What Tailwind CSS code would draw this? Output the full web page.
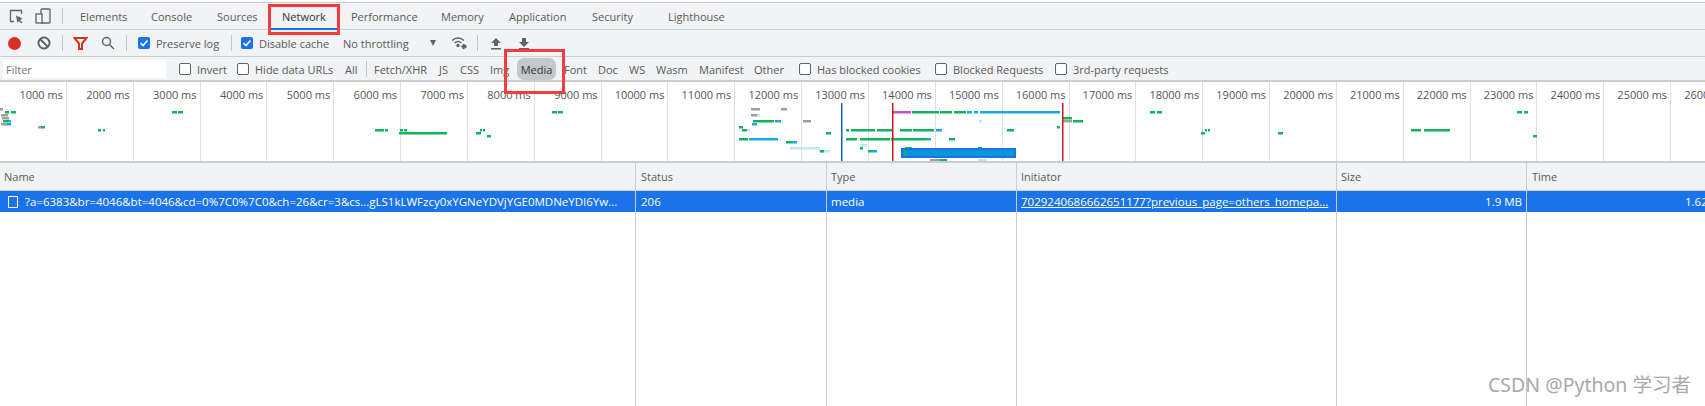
<!DOCTYPE html>
<html lang="en">
<head>
<meta charset="UTF-8" />
<title>DevTools Network</title>
<script src="https://cdn.jsdelivr.net/npm/@tailwindcss/browser@4"></script>
</head>
<body class="relative h-[406px] w-[1705px] overflow-hidden bg-white text-[11px] leading-none text-[#5a5a5a] font-['Open_Sans','Noto_Sans',sans-serif]">

  <!-- Tabs -->
  <div class="mt-[2px] flex h-[28px] items-center border-y border-[#cbcdd1] bg-[#f1f3f4] [&>span:not(:empty):not(.flex)]:pt-[1px]">
    <svg class="ml-[9px] h-[15px] w-[15px]" viewBox="0 0 15 15" fill="none" stroke="#5f6368" stroke-width="1.3"><path d="M5 12.5H1.5V1.5H12.5V5" /><path d="M7 6.5L13.5 9.5L11 11L13.5 13.5L12.5 14.5L10 12L8.5 14Z" fill="#5f6368" stroke="none" /></svg>
    <svg class="ml-[11px] h-[16px] w-[16px]" viewBox="0 0 16 16" fill="none" stroke="#5f6368" stroke-width="1.3"><rect x="6" y="1" width="9" height="14" rx="1" /><rect x="1" y="6" width="6" height="9" fill="#f1f3f4" /></svg>
    <div class="ml-[11px] mr-[17px] h-[16px] w-px bg-[#c4c6ca]"></div>
    <span class="w-[71px]">Elements</span>
    <span class="w-[66px]">Console</span>
    <span class="w-[65px]">Sources</span>
    <span class="w-[69px] text-[#333]">Network</span>
    <span class="w-[90px]">Performance</span>
    <span class="w-[68px]">Memory</span>
    <span class="w-[83px]">Application</span>
    <span class="w-[76px]">Security</span>
    <span>Lighthouse</span>
  </div>

  <!-- Controls -->
  <div class="flex h-[27px] items-center border-b border-[#cbcdd1] bg-[#f1f3f4] [&>span:not(:empty):not(.flex)]:pt-[1px]">
    <div class="ml-[8px] h-[13px] w-[13px] rounded-full bg-[#d93025]"></div>
    <svg class="ml-[16px] h-[14px] w-[14px]" viewBox="0 0 14 14" fill="none" stroke="#5f6368" stroke-width="2"><circle cx="7" cy="7" r="5.5" /><path d="M3 3L11 11" /></svg>
    <div class="ml-[11px] h-[16px] w-px bg-[#c4c6ca]"></div>
    <svg class="ml-[10px] h-[15px] w-[15px]" viewBox="0 0 15 15" fill="none" stroke="#d93025" stroke-width="2"><path d="M1.5 2H13.5L9 7.5V13H6V7.5Z" /></svg>
    <svg class="ml-[13px] h-[14px] w-[14px]" viewBox="0 0 14 14" fill="none" stroke="#5f6368" stroke-width="1.5"><circle cx="5.5" cy="5.5" r="4" /><path d="M8.5 8.5L13 13" /></svg>
    <div class="ml-[11px] h-[16px] w-px bg-[#c4c6ca]"></div>
    <span class="ml-[11px] flex h-[12px] w-[12px] items-center justify-center rounded-[2px] bg-[#1a73e8]"><svg class="h-[10px] w-[10px]" viewBox="0 0 10 10" fill="none" stroke="#fff" stroke-width="1.6"><path d="M1.5 5L4 7.5L8.5 2.5" /></svg></span>
    <span class="ml-[6px] w-[75px]">Preserve log</span>
    <div class="h-[16px] w-px bg-[#c4c6ca]"></div>
    <span class="ml-[9px] flex h-[12px] w-[12px] items-center justify-center rounded-[2px] bg-[#1a73e8]"><svg class="h-[10px] w-[10px]" viewBox="0 0 10 10" fill="none" stroke="#fff" stroke-width="1.6"><path d="M1.5 5L4 7.5L8.5 2.5" /></svg></span>
    <span class="ml-[6px] w-[84px]">Disable cache</span>
    <span class="w-[87px]">No throttling</span>
    <span class="h-0 w-0 border-x-[3.5px] border-t-[6px] border-x-transparent border-t-[#5f6368]"></span>
    <svg class="ml-[15px] h-[14px] w-[17px]" viewBox="0 0 17 14" fill="none" stroke="#5f6368" stroke-width="1.4"><path d="M1 4.5Q7 -0.5 13 4.5" /><path d="M3.5 7Q7 4 10.5 7" /><circle cx="7" cy="9.5" r="1" fill="#5f6368" /><circle cx="13" cy="10.5" r="2" fill="#5f6368" stroke-dasharray="1.5 1" /></svg>
    <div class="ml-[9px] h-[16px] w-px bg-[#c4c6ca]"></div>
    <svg class="ml-[13px] h-[13px] w-[10px]" viewBox="0 0 10 13" fill="#5f6368"><path d="M5 1L10 6H7V9H3V6H0Z" /><rect y="11" width="10" height="1.5" /></svg>
    <svg class="ml-[18px] h-[13px] w-[10px]" viewBox="0 0 10 13" fill="#5f6368"><path d="M5 10L0 5H3V1H7V5H10Z" /><rect y="11" width="10" height="1.5" /></svg>
  </div>

  <!-- Filter bar -->
  <div class="flex h-[25px] items-center border-b-2 border-[#cbcdd1] bg-[#f1f3f4] [&>span:not(:empty):not(.flex)]:pt-[2px]">
    <div class="ml-[3px] flex h-[18px] w-[163px] items-center bg-white pl-[3px] pt-[2px] text-[#757575]">Filter</div>
    <span class="ml-[13px] h-[12px] w-[12px] rounded-[2px] border border-[#5f6368] bg-white"></span>
    <span class="ml-[6px] w-[40px]">Invert</span>
    <span class="h-[12px] w-[12px] rounded-[2px] border border-[#5f6368] bg-white"></span>
    <span class="ml-[6px] w-[90px]">Hide data URLs</span>
    <span class="w-[21px]">All</span>
    <div class="h-[16px] w-px bg-[#c4c6ca]"></div>
    <span class="ml-[7px] w-[65px]">Fetch/XHR</span>
    <span class="w-[21px]">JS</span>
    <span class="w-[30px]">CSS</span>
    <span class="w-[27px]">Img</span>
    <span class="flex h-[22px] w-[39px] items-center justify-center rounded-[7px] bg-[#c4c7cb] pt-[2px] text-[#333]">Media</span>
    <span class="ml-[8px] w-[34px]">Font</span>
    <span class="w-[31px]">Doc</span>
    <span class="w-[27px]">WS</span>
    <span class="w-[43px]">Wasm</span>
    <span class="w-[55px]">Manifest</span>
    <span class="w-[45px]">Other</span>
    <span class="h-[12px] w-[12px] rounded-[2px] border border-[#5f6368] bg-white"></span>
    <span class="ml-[6px] w-[118px]">Has blocked cookies</span>
    <span class="h-[12px] w-[12px] rounded-[2px] border border-[#5f6368] bg-white"></span>
    <span class="ml-[6px] w-[102px]">Blocked Requests</span>
    <span class="h-[12px] w-[12px] rounded-[2px] border border-[#5f6368] bg-white"></span>
    <span class="ml-[6px]">3rd-party requests</span>
  </div>

  <!-- Overview timeline -->
  <div class="relative h-[81px] overflow-hidden border-b-2 border-[#cbcdd1]">
    <div id="ticks" class="flex h-full w-[1800px]"></div>
    <svg id="marks" class="absolute left-0 top-0" width="1705" height="81" viewBox="0 81 1705 81"></svg>
  </div>

  <!-- Request table -->
  <div class="grid h-[244px] grid-cols-[636px_191px_190px_320px_190px_178px] text-[11.5px]">
    <div class="border-r border-[#cbcdd1]">
      <div class="flex h-[28px] items-center border-b border-[#cbcdd1] bg-[#f1f3f4] pl-[4px] text-[11px]">Name</div>
      <div class="flex h-[21px] items-center overflow-hidden whitespace-nowrap bg-[#1a73e8] pl-[8px] text-white">
        <span class="mr-[7px] h-[12px] w-[10px] shrink-0 border border-white"></span>?a=6383&amp;br=4046&amp;bt=4046&amp;cd=0%7C0%7C0&amp;ch=26&amp;cr=3&amp;cs...gLS1kLWFzcy0xYGNeYDVjYGE0MDNeYDI6Yw...
      </div>
    </div>
    <div class="border-r border-[#cbcdd1]">
      <div class="flex h-[28px] items-center border-b border-[#cbcdd1] bg-[#f1f3f4] pl-[5px] text-[11px]">Status</div>
      <div class="flex h-[21px] items-center bg-[#1a73e8] pl-[5px] text-white">206</div>
    </div>
    <div class="border-r border-[#cbcdd1]">
      <div class="flex h-[28px] items-center border-b border-[#cbcdd1] bg-[#f1f3f4] pl-[4px] text-[11px]">Type</div>
      <div class="flex h-[21px] items-center bg-[#1a73e8] pl-[4px] text-white">media</div>
    </div>
    <div class="border-r border-[#cbcdd1]">
      <div class="flex h-[28px] items-center border-b border-[#cbcdd1] bg-[#f1f3f4] pl-[4px] text-[11px]">Initiator</div>
      <div class="flex h-[21px] items-center overflow-hidden whitespace-nowrap bg-[#1a73e8] pl-[4px] text-white underline">7029240686662651177?previous_page=others_homepa...</div>
    </div>
    <div class="border-r border-[#cbcdd1]">
      <div class="flex h-[28px] items-center border-b border-[#cbcdd1] bg-[#f1f3f4] pl-[4px] text-[11px]">Size</div>
      <div class="flex h-[21px] items-center justify-end bg-[#1a73e8] pr-[4px] text-white">1.9 MB</div>
    </div>
    <div>
      <div class="flex h-[28px] items-center border-b border-[#cbcdd1] bg-[#f1f3f4] pl-[5px] text-[11px]">Time</div>
      <div class="flex h-[21px] items-center overflow-hidden whitespace-nowrap bg-[#1a73e8] pl-[158px] text-white">1.62 s</div>
    </div>
  </div>

  <!-- Annotation boxes and watermark lie over the panel -->
  <div class="absolute left-[268px] top-[4px] h-[31px] w-[72px] border-[3px] border-[#f53b3b]"></div>
  <div class="absolute left-[271px] top-[28px] h-[2px] w-[66px] bg-[#1a73e8]"></div>
  <div class="absolute left-[504px] top-[49px] h-[45px] w-[61px] border-[3px] border-[#f53b3b]"></div>
  <div class="absolute left-[1488px] top-[375px] whitespace-nowrap text-[19.5px] leading-[20px] text-[#a8a8a8] font-['Noto_Sans','Noto_Sans_CJK_SC',sans-serif]">CSDN @Python 学习者</div>

  <script>
    const ticks = document.getElementById('ticks');
    for (let i = 1; i <= 27; i++) {
      const tick = document.createElement('div');
      tick.className = 'h-full w-[66.85px] shrink-0 border-r border-[#e0e0e0] pr-[3px] pt-[7px] text-right whitespace-nowrap text-[11px] text-[#555]';
      tick.textContent = (i * 1000) + ' ms';
      ticks.appendChild(tick);
    }

    const G = '#0fb45f', B = '#1ba7e8', P = '#c94fd0', A = '#a0a0a0', L = '#bfe6f7';
    // x1, x2, y, colour
    const marks = [
      [0,3,108,A],[5,9,111,G],[11,16,111,G],[1,8,114,A],[2,9,117,A],[3,8,120,G],[8,11,120,B],[1,7,123,A],[7,11,123,B],
      [38,41,126,A],[41,45,126,G],[98,101,129,G],[103,105,129,G],[172,177,111,G],[178,183,111,G],
      [375,384,129,G],[385,388,129,G],[400,403,129,G],[404,407,129,G],[399,447,132,G],
      [476,481,132,G],[480,482,129,G],[483,485,129,G],[487,491,135,G],[552,557,111,G],[558,563,111,G],
      [751,760,108,A],[781,787,108,A],[751,757,114,A],[757,760,114,L],[753,774,120,G],[775,781,120,B],[752,757,123,B],
      [739,743,126,G],[742,747,129,G],[747,750,129,L],[803,811,120,A],[826,831,132,G],[739,748,138,G],[749,778,138,B],
      [786,792,141,G],[792,797,141,B],[790,820,147,L],[819,830,150,L],[820,824,150,G],
      [893,911,111,P],[912,939,111,G],[940,952,111,G],[954,966,111,G],[967,972,111,B],[974,978,111,B],[980,1060,111,B],
      [1063,1072,117,G],[1063,1072,120,A],[1073,1083,120,G],[979,982,120,L],
      [846,849,129,G],[851,875,129,G],[877,892,129,G],[900,912,129,G],[913,934,129,G],[936,942,129,B],[1007,1014,129,G],[1057,1060,126,G],
      [846,857,138,G],[860,890,138,G],[891,927,138,G],[927,931,138,B],[949,955,138,G],
      [860,867,144,L],[860,863,147,G],[868,872,150,G],[872,877,150,B],
      [905,912,147,G],[978,982,147,G],[930,940,159,A],[940,947,159,G],[978,987,159,L],
      [1150,1155,111,G],[1157,1162,111,G],[1201,1205,132,G],[1205,1207,129,G],[1208,1210,129,G],[1278,1283,132,G],
      [1411,1421,129,G],[1424,1450,129,G],[1517,1522,111,G],[1524,1528,111,G],[1533,1537,135,G]
    ];
    const svgNS = 'http://www.w3.org/2000/svg';
    const marksSvg = document.getElementById('marks');
    function addRect(x, y, w, h, fill, stroke) {
      const r = document.createElementNS(svgNS, 'rect');
      r.setAttribute('x', x); r.setAttribute('y', y);
      r.setAttribute('width', w); r.setAttribute('height', h);
      r.setAttribute('fill', fill);
      if (stroke) { r.setAttribute('stroke', stroke); r.setAttribute('stroke-width', 2); }
      marksSvg.appendChild(r);
    }
    marks.forEach(m => addRect(m[0], m[2] - 1, m[1] - m[0], 2.5, m[3]));
    addRect(902, 148, 113, 8, '#0a96d8', '#1a73e8');
    addRect(904, 149, 2, 6, '#0fb45f');
    addRect(841, 102, 1.5, 60, '#1a5fc4');
    addRect(892, 102, 1.5, 60, '#d01818');
    addRect(1062, 102, 1.5, 60, '#d01818');
  </script>
</body>
</html>
